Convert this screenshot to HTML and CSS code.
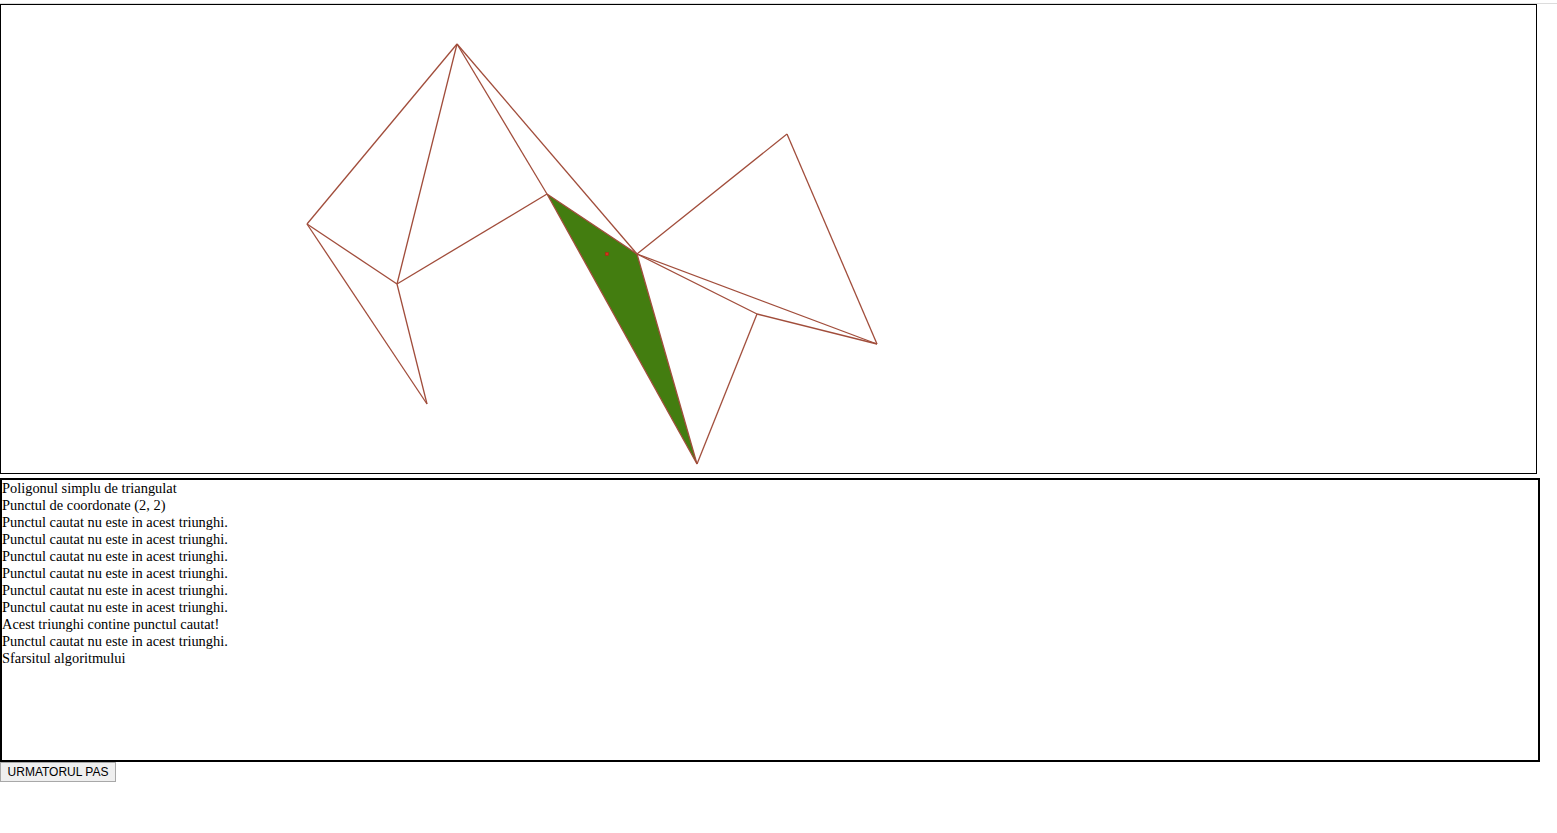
FILE: index.html
```html
<!DOCTYPE html>
<html>
<head>
<meta charset="utf-8">
<title>Triangulare</title>
<link rel="stylesheet" href="styles.css">
</head>
<body>
<div class="topline"></div>
<div class="board">
  <svg class="plot" width="1535" height="468" viewBox="0 0 1535 468">
    <polygon class="hit" points="546,189 636,249 696,459"/>
    <g class="edges">
      <line x1="456" y1="39" x2="306" y2="219"/>
      <line x1="456" y1="39" x2="396" y2="279"/>
      <line x1="456" y1="39" x2="546" y2="189"/>
      <line x1="456" y1="39" x2="636" y2="249"/>
      <line x1="306" y1="219" x2="396" y2="279"/>
      <line x1="306" y1="219" x2="426" y2="399"/>
      <line x1="396" y1="279" x2="426" y2="399"/>
      <line x1="396" y1="279" x2="546" y2="189"/>
      <line x1="546" y1="189" x2="636" y2="249"/>
      <line x1="546" y1="189" x2="696" y2="459"/>
      <line x1="636" y1="249" x2="696" y2="459"/>
      <line x1="636" y1="249" x2="786" y2="129"/>
      <line x1="786" y1="129" x2="876" y2="339"/>
      <line x1="636" y1="249" x2="876" y2="339"/>
      <line x1="636" y1="249" x2="756" y2="309"/>
      <line x1="756" y1="309" x2="876" y2="339"/>
      <line x1="756" y1="309" x2="696" y2="459"/>
    </g>
    <rect class="pt" x="604.5" y="247.5" width="3" height="3"/>
  </svg>
</div>
<div class="log">
  <div>Poligonul simplu de triangulat</div>
  <div>Punctul de coordonate (2, 2)</div>
  <div>Punctul cautat nu este in acest triunghi.</div>
  <div>Punctul cautat nu este in acest triunghi.</div>
  <div>Punctul cautat nu este in acest triunghi.</div>
  <div>Punctul cautat nu este in acest triunghi.</div>
  <div>Punctul cautat nu este in acest triunghi.</div>
  <div>Punctul cautat nu este in acest triunghi.</div>
  <div>Acest triunghi contine punctul cautat!</div>
  <div>Punctul cautat nu este in acest triunghi.</div>
  <div>Sfarsitul algoritmului</div>
</div>
<button class="next" type="button">URMATORUL PAS</button>
</body>
</html>
```

FILE: styles.css
```css
html, body {
  margin: 0;
  padding: 0;
  background: #ffffff;
}

body {
  font-family: "Liberation Serif", "Times New Roman", serif;
  color: #000000;
}

.topline {
  margin-top: 3px;
  height: 1px;
  background: #dcdcdc;
}

.board {
  width: 1535px;
  height: 468px;
  border: 1px solid #000000;
}

.plot {
  display: block;
}

.hit {
  fill: #437d10;
  stroke: none;
}

.edges line {
  stroke: #a14d3b;
  stroke-width: 1.3;
}

.pt {
  fill: #d8301c;
  stroke: #b02010;
  stroke-width: 0.5;
}

.log {
  margin-top: 4px;
  width: 1536px;
  height: 280px;
  border: 2px solid #000000;
  font-size: 14.4px;
  line-height: 17px;
  padding: 0;
}

.next {
  display: block;
  margin: 0;
  height: 20px;
  width: 116px;
  padding: 0;
  font-family: "Liberation Sans", Arial, sans-serif;
  font-size: 12px;
  color: #000000;
  background: #efefef;
  border: 1px solid #a8a8a8;
  border-radius: 0;
}
```
